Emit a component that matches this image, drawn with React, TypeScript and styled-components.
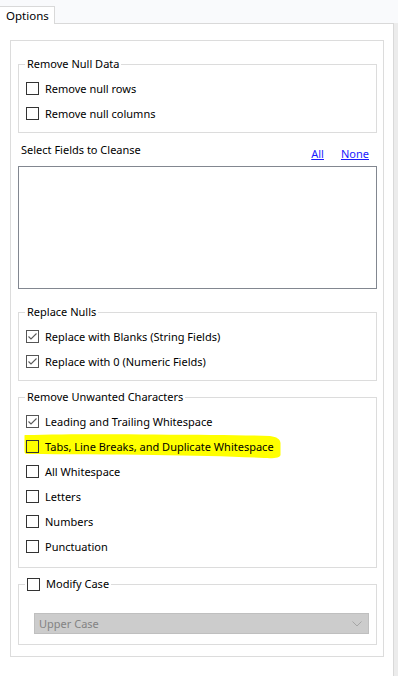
import React from "react";
import styled, { createGlobalStyle } from "styled-components";

const Global = createGlobalStyle`
  html, body { margin: 0; padding: 0; background: #ffffff; }
  body { font-family: "Segoe UI", "Noto Sans", "Open Sans", sans-serif; font-size: 11px; color: #000; }
`;

const Page = styled.div`
  width: 398px;
  height: 676px;
  overflow: hidden;
  background: #f9fafc;
  display: flex;
  flex-direction: column;
`;

const TabStrip = styled.div`
  height: 23px;
  display: flex;
  align-items: flex-end;
`;

const Tab = styled.div`
  height: 18px;
  width: 55px;
  box-sizing: border-box;
  border: 1px solid #d9d9d9;
  border-bottom: none;
  border-left: none;
  background: #ffffff;
  padding-left: 6px;
  line-height: 18px;
  font-size: 11.5px;
  margin-bottom: -1px;
  position: relative;
  z-index: 1;
`;

const TabPanel = styled.div`
  width: 394px;
  box-sizing: border-box;
  flex: 1;
  background: #ffffff;
  border-top: 1px solid #d9d9d9;
  border-right: 1px solid #d9d9d9;
  box-shadow: 4px 0 0 #ececec;
  padding: 16px 10px 0 10px;
`;

const Inner = styled.div`
  width: 374px;
  box-sizing: border-box;
  border: 1px solid #dcdcdc;
  padding: 15px 6px 11px 7px;
  display: flex;
  flex-direction: column;
`;

const Group = styled.fieldset<{ $mt?: number; $pt?: number; $pb?: number }>`
  margin: ${(p) => p.$mt ?? 0}px 0 0 0;
  border: 1px solid #dcdcdc;
  padding: ${(p) => p.$pt ?? 4}px 0 ${(p) => p.$pb ?? 6}px 7px;
  min-width: 0;
  display: flex;
  flex-direction: column;
`;

const Legend = styled.legend`
  margin-left: -1px;
  padding: 0 2px;
  line-height: 16px;
  height: 16px;
  display: flex;
  align-items: center;
  gap: 6px;
`;

const Row = styled.label`
  position: relative;
  height: 25px;
  display: flex;
  align-items: center;
  gap: 6px;
`;

const RowText = styled.span`
  position: relative;
  z-index: 1;
`;

const Box = styled.span<{ $checked?: boolean }>`
  position: relative;
  z-index: 1;
  width: 13px;
  height: 13px;
  box-sizing: border-box;
  border: 1px solid ${(p) => (p.$checked ? "#555555" : "#333333")};
  background: transparent;
  display: inline-flex;
  flex-shrink: 0;
`;

const Highlight = styled.svg`
  position: absolute;
  left: -2px;
  top: -1px;
  z-index: 0;
`;

const HeaderRow = styled.div`
  height: 33px;
  display: flex;
  justify-content: space-between;
`;

const FieldsLabel = styled.span`
  padding: 9px 0 0 3px;
  line-height: 16px;
`;

const Links = styled.div`
  align-self: flex-end;
  display: flex;
  gap: 17px;
  padding: 0 8px 4px 0;
  line-height: 16px;
`;

const Link = styled.a`
  color: #1a1aff;
  text-decoration: underline;
  cursor: pointer;
`;

const ListBox = styled.div`
  height: 123px;
  box-sizing: border-box;
  border: 1px solid #828790;
  background: #ffffff;
`;

const Select = styled.div`
  margin-left: 8px;
  width: 335px;
  height: 21px;
  box-sizing: border-box;
  background: #cccccc;
  border: 1px solid #bfbfbf;
  color: #838383;
  display: flex;
  align-items: center;
  justify-content: space-between;
  padding: 0 6px 0 4px;
`;

const Check: React.FC<{ checked?: boolean }> = ({ checked }) => (
  <Box $checked={checked}>
    {checked && (
      <svg width="11" height="11" viewBox="0 0 11 11">
        <path d="M1.5 5.5 L4 8 L9.5 2.5" fill="none" stroke="#5a5a5a" strokeWidth="1.1" />
      </svg>
    )}
  </Box>
);

const CheckRow: React.FC<{ label: string; checked?: boolean; highlight?: boolean }> = ({
  label,
  checked,
  highlight,
}) => (
  <Row>
    {highlight && (
      <Highlight width="258" height="26" viewBox="0 0 258 26">
        <path
          d="M1 2 C40 1 90 1 130 1.5 C180 2 220 2 246 3 C253 4 256 6 256.5 10 L256.5 22 C256 25 250 25.5 240 25 C210 23.5 170 22.5 130 22 C90 21.5 40 21.5 3 21 C1 21 0.5 20 0.5 18 L0.5 4 C0.5 2.5 0.5 2 1 2 Z"
          fill="#ffff00"
        />
      </Highlight>
    )}
    <Check checked={checked} />
    <RowText>{label}</RowText>
  </Row>
);

export default function App() {
  return (
    <Page>
      <Global />
      <TabStrip>
        <Tab>Options</Tab>
      </TabStrip>
      <TabPanel>
        <Inner>
          <Group>
            <Legend>Remove Null Data</Legend>
            <CheckRow label="Remove null rows" />
            <CheckRow label="Remove null columns" />
          </Group>

          <HeaderRow>
            <FieldsLabel>Select Fields to Cleanse</FieldsLabel>
            <Links>
              <Link>All</Link>
              <Link>None</Link>
            </Links>
          </HeaderRow>
          <ListBox />

          <Group $mt={15}>
            <Legend>Replace Nulls</Legend>
            <CheckRow label="Replace with Blanks (String Fields)" checked />
            <CheckRow label="Replace with 0 (Numeric Fields)" checked />
          </Group>

          <Group $mt={8} $pb={8}>
            <Legend>Remove Unwanted Characters</Legend>
            <CheckRow label="Leading and Trailing Whitespace" checked />
            <CheckRow label="Tabs, Line Breaks, and Duplicate Whitespace" highlight />
            <CheckRow label="All Whitespace" />
            <CheckRow label="Letters" />
            <CheckRow label="Numbers" />
            <CheckRow label="Punctuation" />
          </Group>

          <Group $mt={8} $pt={21} $pb={10}>
            <Legend>
              <Check />
              <span>Modify Case</span>
            </Legend>
            <Select>
              <span>Upper Case</span>
              <svg width="10" height="6" viewBox="0 0 10 6">
                <path d="M0.5 0.5 L5 5 L9.5 0.5" fill="none" stroke="#a6a6a6" strokeWidth="1" />
              </svg>
            </Select>
          </Group>
        </Inner>
      </TabPanel>
    </Page>
  );
}
